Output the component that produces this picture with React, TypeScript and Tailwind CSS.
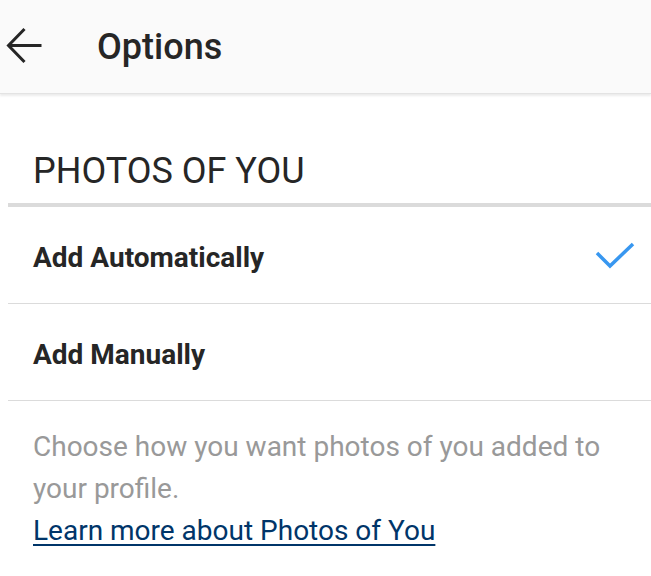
export default function App() {
  return (
    <div className="w-[651px] h-[576px] bg-white overflow-hidden" style={{ fontFamily: "Roboto, 'Liberation Sans', sans-serif" }}>
      {/* header */}
      <header className="h-[94px] bg-[#fafafa] border-b border-[#e3e3e3] shadow-[0_2px_2px_rgba(0,0,0,0.08)] flex items-center">
        <svg width="44" height="40" viewBox="0 0 44 40" className="ml-[4px] shrink-0" fill="none" stroke="#262626" strokeWidth="3" strokeLinecap="butt" strokeLinejoin="miter">
          <path d="M4 18.5 H37.5" />
          <path d="M20.5 2 L4.5 18.5 L20.5 35" />
        </svg>
        <h1 className="ml-[49px] text-[36px] leading-[40px] font-medium text-[#262626]">Options</h1>
      </header>

      <div className="ml-[8px]">
        <h2 className="pt-[57px] pl-[25px] text-[36px] leading-[40px] text-[#262626]">PHOTOS OF YOU</h2>
        <div className="mt-[12px] h-[4px] bg-[#dbdbdb]" />

        <div className="h-[97px] border-b border-[#dbdbdb] flex items-center justify-between pl-[25px] pr-[16px]">
          <span className="text-[28px] font-bold text-[#262626] leading-[32px] mt-[5px]">Add Automatically</span>
          <svg width="40" height="28" viewBox="0 0 40 28" fill="none" stroke="#3897f0" strokeWidth="3.5" className="mt-[2px]">
            <path d="M2 11 L15 24 L38 2" />
          </svg>
        </div>

        <div className="h-[97px] border-b border-[#dbdbdb] flex items-center pl-[25px]">
          <span className="text-[28px] font-bold text-[#262626] leading-[32px] mt-[5px]">Add Manually</span>
        </div>

        <p className="pt-[25px] pl-[25px] text-[28px] leading-[42px] text-[#999999]">
          Choose how you want photos of you added to
          <br />
          your profile.
          <br />
          <a className="text-[#003569] underline underline-offset-[4px] decoration-[2px]">Learn more about Photos of You</a>
        </p>
      </div>
    </div>
  );
}
